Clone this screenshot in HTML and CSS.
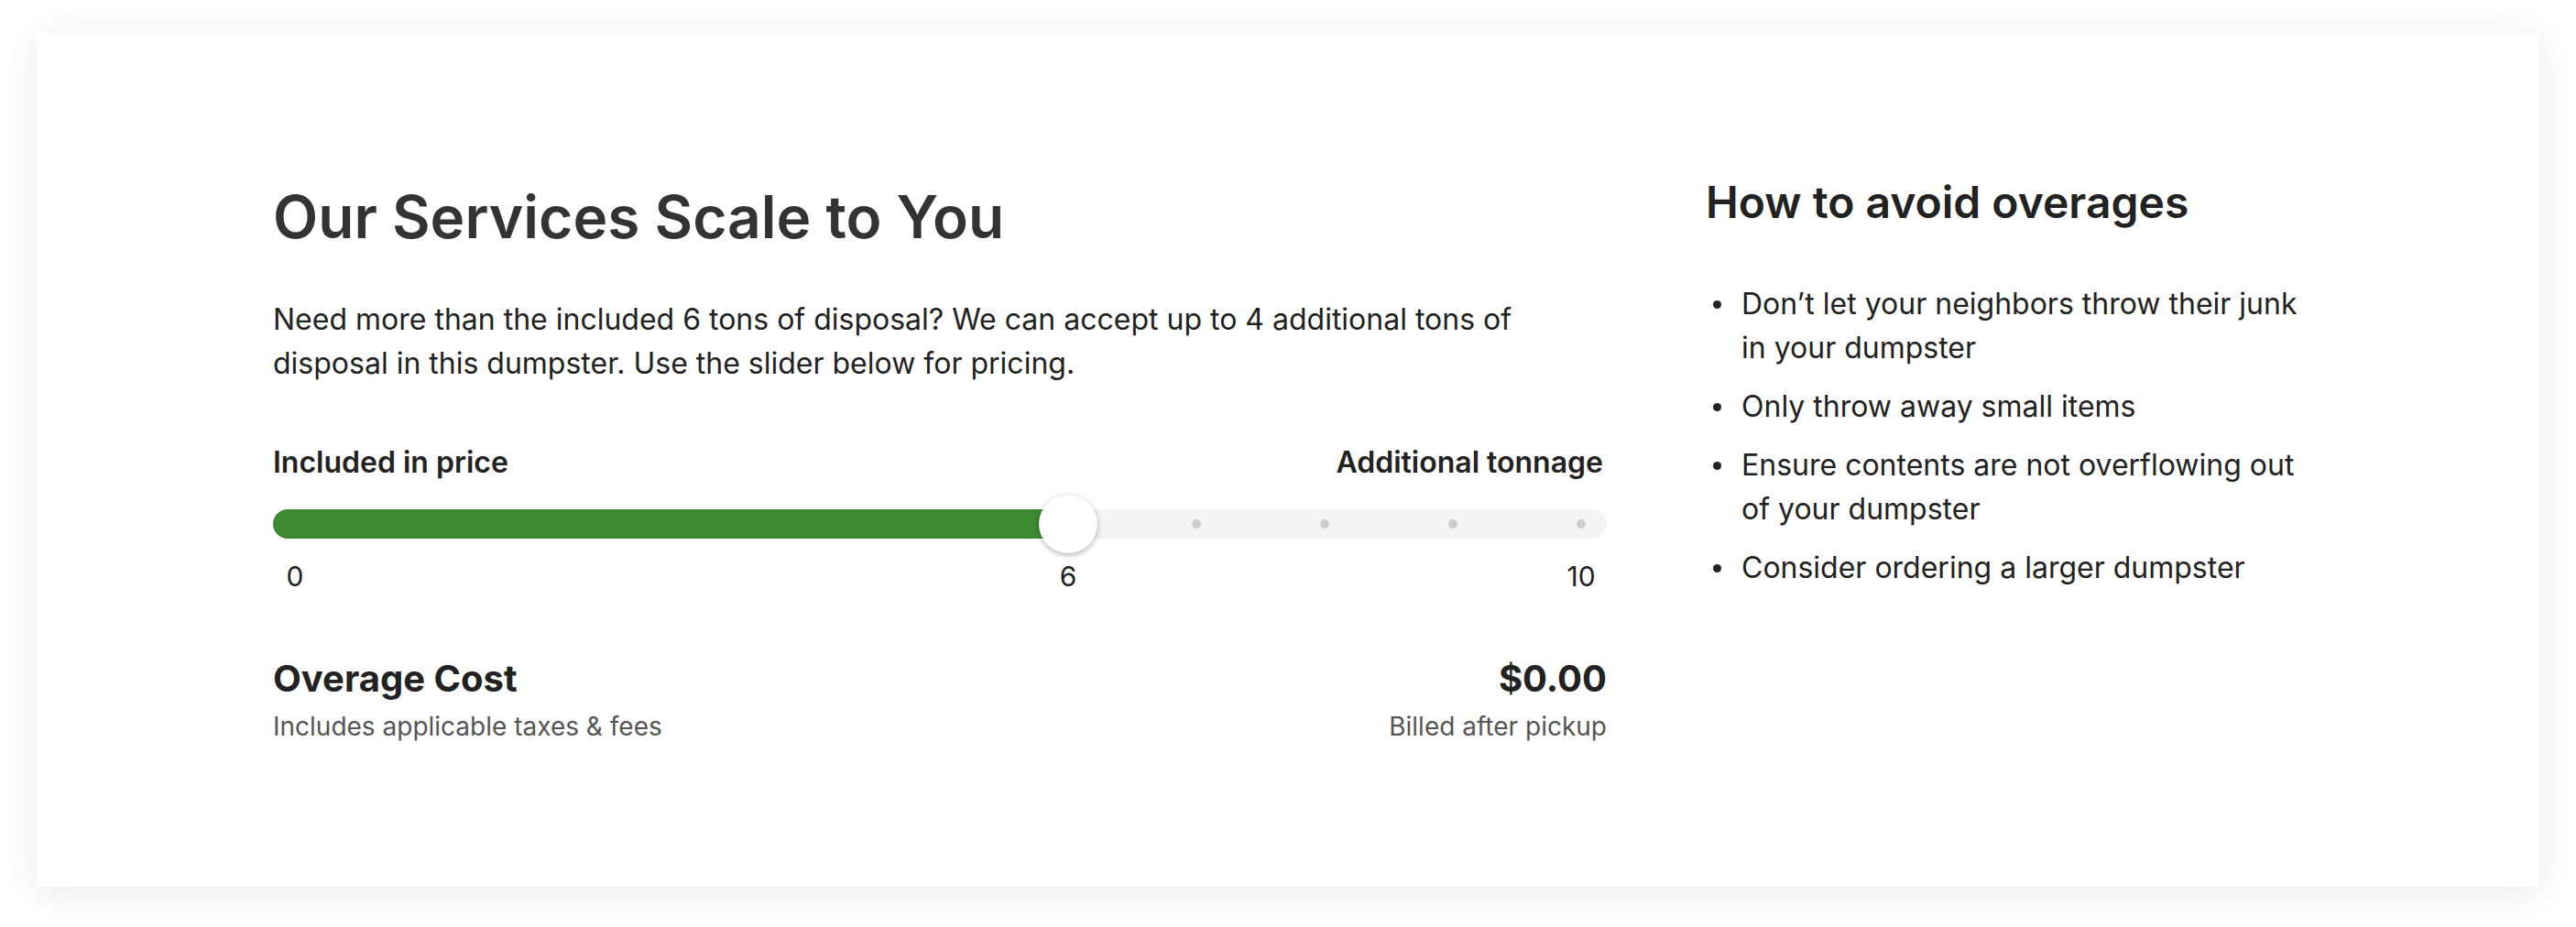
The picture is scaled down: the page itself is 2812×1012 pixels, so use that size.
FILE: index.html
```html
<!DOCTYPE html>
<html lang="en">
<head>
<meta charset="utf-8">
<title>Our Services Scale to You</title>
<link rel="stylesheet" href="styles.css">
</head>
<body>
<section class="card">
  <div class="main">
    <h2 class="title">Our Services Scale to You</h2>
    <p class="intro">Need more than the included 6 tons of disposal? We can accept up to 4 additional tons of disposal in this dumpster. Use the slider below for pricing.</p>
    <div class="legend">
      <span>Included in price</span>
      <span>Additional tonnage</span>
    </div>
    <div class="slider">
      <div class="track">
        <div class="fill" style="width: 868px"></div>
        <span class="dot" style="left: 1008px"></span>
        <span class="dot" style="left: 1148px"></span>
        <span class="dot" style="left: 1288px"></span>
        <span class="dot" style="left: 1428px"></span>
        <span class="thumb" style="left: 868px"></span>
      </div>
    </div>
    <div class="ticks">
      <span class="tick" style="left: 24px">0</span>
      <span class="tick" style="left: 868px">6</span>
      <span class="tick" style="left: 1428px">10</span>
    </div>
    <div class="cost">
      <div class="cost-row">
        <span class="cost-label">Overage Cost</span>
        <span class="cost-value">$0.00</span>
      </div>
      <div class="cost-row sub">
        <span>Includes applicable taxes &amp; fees</span>
        <span>Billed after pickup</span>
      </div>
    </div>
  </div>
  <aside class="side">
    <h3 class="side-title">How to avoid overages</h3>
    <ul class="tips">
      <li>Don’t let your neighbors throw their junk in your dumpster</li>
      <li>Only throw away small items</li>
      <li>Ensure contents are not overflowing out of your dumpster</li>
      <li>Consider ordering a larger dumpster</li>
    </ul>
  </aside>
</section>
</body>
</html>
```
FILE: styles.css
```css
* { box-sizing: border-box; }

html, body {
  background: #ffffff;
}

body {
  margin: 0;
  padding: 36px 40px 44px 40px;
  font-family: Inter, "Noto Sans", "Liberation Sans", sans-serif;
  color: #222222;
}

.card {
  background: #ffffff;
  box-shadow: 0 6px 40px rgba(0, 0, 0, 0.09);
  padding: 156px 260px 154px 258px;
  display: grid;
  grid-template-columns: 1456px 650px;
  justify-content: space-between;
  align-items: start;
}

.title {
  margin: 0 0 43px 0;
  font-size: 64px;
  line-height: 89.6px;
  font-weight: 600;
  color: #333333;
}

.intro {
  margin: 0;
  font-size: 32px;
  line-height: 48px;
  font-weight: 400;
  color: #222222;
}

.legend {
  margin-top: 60px;
  padding-right: 4px;
  display: flex;
  justify-content: space-between;
  font-size: 32px;
  line-height: 48px;
  font-weight: 600;
  color: #222222;
}

.slider {
  margin-top: 11px;
  height: 64px;
  display: flex;
  align-items: center;
}

.track {
  position: relative;
  width: 100%;
  height: 32px;
  border-radius: 16px;
  background: #f4f4f4;
}

.fill {
  height: 100%;
  border-radius: 16px 0 0 16px;
  background: #3d8a31;
}

.dot {
  position: absolute;
  top: 50%;
  width: 10px;
  height: 10px;
  margin: -5px 0 0 -5px;
  border-radius: 50%;
  background: #cccccc;
}

.thumb {
  position: absolute;
  top: 50%;
  width: 64px;
  height: 64px;
  margin: -32px 0 0 -32px;
  border-radius: 50%;
  background: #ffffff;
  box-shadow: 0 2px 6px rgba(0, 0, 0, 0.3);
}

.ticks {
  position: relative;
  margin-top: 4px;
  height: 42px;
  font-size: 30px;
  line-height: 42px;
  color: #222222;
}

.tick {
  position: absolute;
  top: 0;
  transform: translateX(-50%);
}

.cost {
  margin-top: 63px;
}

.cost-row {
  display: flex;
  justify-content: space-between;
  align-items: baseline;
}

.cost-label,
.cost-value {
  font-size: 40px;
  line-height: 56px;
  font-weight: 700;
  color: #222222;
}

.cost-row.sub {
  margin-top: 3px;
  font-size: 28px;
  line-height: 42px;
  color: #555555;
}

.side-title {
  margin: 0 0 58px 0;
  font-size: 48px;
  line-height: 57.6px;
  font-weight: 600;
  color: #222222;
}

.tips {
  list-style: none;
  margin: 0;
  padding: 0;
  font-size: 32px;
  line-height: 48px;
  color: #222222;
}

.tips li {
  display: flex;
  align-items: flex-start;
}

.tips li + li {
  margin-top: 16px;
}

.tips li::before {
  content: "";
  flex: none;
  width: 9px;
  height: 9px;
  margin: 20px 22px 0 8px;
  border-radius: 50%;
  background: #222222;
}
```
